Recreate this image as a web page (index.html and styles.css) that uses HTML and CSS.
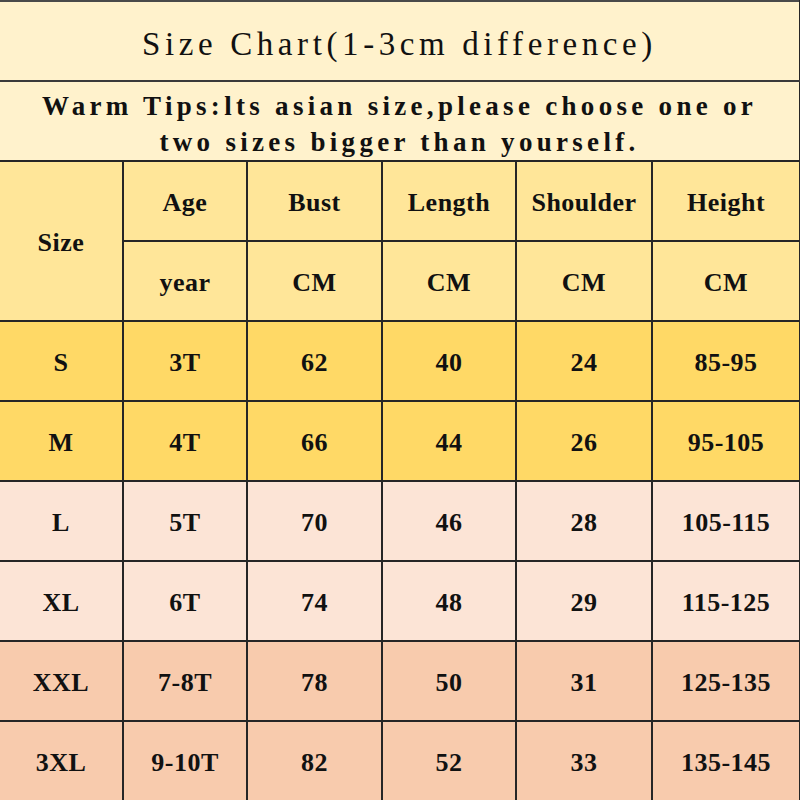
FILE: index.html
```html
<!DOCTYPE html>
<html>
<head>
<meta charset="utf-8">
<title>Size Chart</title>
<link rel="stylesheet" href="styles.css">
</head>
<body>
<table class="chart">
  <colgroup>
    <col class="col-size">
    <col class="col-age">
    <col class="col-bust">
    <col class="col-length">
    <col class="col-shoulder">
    <col class="col-height">
  </colgroup>
  <tr class="row-title">
    <td colspan="6" class="title">Size Chart(1-3cm difference)</td>
  </tr>
  <tr class="row-tips">
    <td colspan="6" class="tips">Warm Tips:lts asian size,please choose one or<br>two sizes bigger than yourself.</td>
  </tr>
  <tr class="row-head">
    <td rowspan="2">Size</td>
    <td>Age</td>
    <td>Bust</td>
    <td>Length</td>
    <td>Shoulder</td>
    <td>Height</td>
  </tr>
  <tr class="row-head">
    <td>year</td>
    <td>CM</td>
    <td>CM</td>
    <td>CM</td>
    <td>CM</td>
  </tr>
  <tr class="row-gold">
    <td>S</td><td>3T</td><td>62</td><td>40</td><td>24</td><td>85-95</td>
  </tr>
  <tr class="row-gold">
    <td>M</td><td>4T</td><td>66</td><td>44</td><td>26</td><td>95-105</td>
  </tr>
  <tr class="row-blush">
    <td>L</td><td>5T</td><td>70</td><td>46</td><td>28</td><td>105-115</td>
  </tr>
  <tr class="row-blush">
    <td>XL</td><td>6T</td><td>74</td><td>48</td><td>29</td><td>115-125</td>
  </tr>
  <tr class="row-peach">
    <td>XXL</td><td>7-8T</td><td>78</td><td>50</td><td>31</td><td>125-135</td>
  </tr>
  <tr class="row-peach">
    <td>3XL</td><td>9-10T</td><td>82</td><td>52</td><td>33</td><td>135-145</td>
  </tr>
</table>
</body>
</html>
```

FILE: styles.css
```css
html, body {
  margin: 0;
  padding: 0;
  background: #f6f6f4;
}

.chart {
  width: 800px;
  border-collapse: collapse;
  table-layout: fixed;
  color: #111111;
  font-family: "Liberation Serif", "Times New Roman", serif;
  font-weight: bold;
  font-size: 26px;
  border-top: 2px solid #4a4a4a;
  border-right: 2px solid #5a5a5a;
  border-bottom: 2px solid #5a5a5a;
}

.col-size { width: 123px; }
.col-age { width: 124px; }
.col-bust { width: 135px; }
.col-length { width: 134px; }
.col-shoulder { width: 136px; }
.col-height { width: 148px; }

.chart td {
  border: 2px solid #262626;
  text-align: center;
  vertical-align: middle;
  padding: 4px 0 0 0;
  height: 74px;
  letter-spacing: 0.5px;
}

.chart tr > td:first-child {
  border-left: none;
}

.row-title td,
.row-tips td {
  background: #fff2cc;
}

.row-title td {
  border-top: 2px solid #4a4a4a;
  border-bottom: 2px solid #3a3a3a;
}

.chart .title {
  font-weight: normal;
  font-size: 33px;
  letter-spacing: 4.6px;
  padding-top: 6px;
  height: 72px;
}

.chart .tips {
  font-size: 27px;
  line-height: 36px;
  letter-spacing: 4.3px;
  padding-top: 6px;
  height: 72px;
}

.row-head td {
  background: #ffe699;
}

.row-gold td {
  background: #ffd966;
}

.row-blush td {
  background: #fce4d6;
}

.row-peach td {
  background: #f8cbad;
}
```
